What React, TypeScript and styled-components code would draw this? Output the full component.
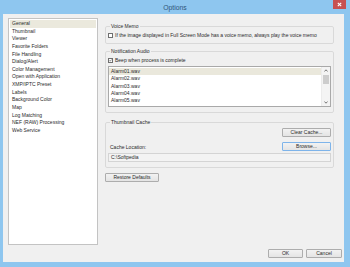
import React, { useState } from "react";
import styled, { createGlobalStyle } from "styled-components";

const GlobalStyle = createGlobalStyle`
  html, body {
    margin: 0;
    padding: 0;
    background: #8ec6ef;
  }
  body {
    font-family: "Liberation Sans", Arial, sans-serif;
  }
`;

const Window = styled.div`
  width: 350px;
  height: 267px;
  display: flex;
  flex-direction: column;
  background: #8ec6ef;
`;

const TitleBar = styled.div`
  position: relative;
  height: 14px;
  flex: none;
  display: flex;
  align-items: center;
  justify-content: center;
  font-size: 6.8px;
  color: #2f557a;
`;

const CloseButton = styled.div`
  position: absolute;
  top: 0;
  right: 4px;
  width: 13px;
  height: 9px;
  background: #c75050;
  display: flex;
  align-items: center;
  justify-content: center;
`;

const Client = styled.div`
  flex: 1;
  margin: 0 6px 5px 3px;
  background: #f0f0f0;
  display: flex;
  flex-direction: column;
  padding: 4px 2px 3px 5px;
  box-sizing: border-box;
  font-size: 5px;
  color: #2a2a2a;
`;

const Main = styled.div`
  height: 227px;
  display: flex;
  gap: 7px;
`;

const NavList = styled.div`
  width: 90px;
  box-sizing: border-box;
  border: 1px solid #c3c3c3;
  background: #fff;
  padding: 1px 1px;
`;

const NavItem = styled.div<{ $selected?: boolean }>`
  height: 7.64px;
  line-height: 7.64px;
  padding-left: 2px;
  white-space: nowrap;
  background: ${(p) => (p.$selected ? "#ebe9dd" : "transparent")};
`;

const Panel = styled.div`
  width: 229px;
  display: flex;
  flex-direction: column;
  padding-top: 5px;
`;

const Group = styled.fieldset<{ $gap?: number }>`
  margin: ${(p) => p.$gap ?? 0}px 0 0 0;
  padding: 0 2px 5px 2px;
  border: 1px solid #d9d9d9;
  border-radius: 2px;
  min-width: 0;
  display: flex;
  flex-direction: column;
`;

const Legend = styled.legend`
  padding: 0 1px;
  margin-left: 2px;
  height: 6px;
  line-height: 6px;
`;

const CheckRow = styled.label`
  display: flex;
  align-items: center;
  gap: 2px;
  height: 6px;
  margin-top: 3px;
  white-space: nowrap;
`;

const Box = styled.span`
  width: 5px;
  height: 5px;
  box-sizing: border-box;
  border: 1px solid #6f6f6f;
  background: #fff;
  display: flex;
  align-items: center;
  justify-content: center;
  flex: none;
`;

const SoundList = styled.div`
  margin-top: 3px;
  height: 41px;
  box-sizing: border-box;
  border: 1px solid #a9a9a9;
  background: #fff;
  display: flex;
`;

const SoundItems = styled.div`
  flex: 1;
  padding-top: 1px;
`;

const SoundItem = styled.div<{ $selected?: boolean }>`
  height: 7.25px;
  line-height: 7.25px;
  padding-left: 2px;
  background: ${(p) => (p.$selected ? "#eae8dc" : "transparent")};
`;

const ScrollBar = styled.div`
  width: 8px;
  display: flex;
  flex-direction: column;
  align-items: center;
  background: #f4f4f4;
  border-left: 1px solid #ececec;
`;

const Arrow = styled.div`
  height: 7px;
  width: 100%;
  display: flex;
  align-items: center;
  justify-content: center;
`;

const Thumb = styled.div`
  width: 6px;
  height: 9px;
  margin-top: 1px;
  background: #cdcdcd;
`;

const Track = styled.div`
  flex: 1;
`;

const Button = styled.button<{ $w: number; $focus?: boolean }>`
  width: ${(p) => p.$w}px;
  height: 9px;
  padding: 0;
  font: inherit;
  font-size: 5px;
  color: #2a2a2a;
  border: 1px solid ${(p) => (p.$focus ? "#7eb4ea" : "#adadad")};
  border-radius: 1px;
  background: linear-gradient(#f2f2f2, #e4e4e4);
  box-sizing: border-box;
  line-height: 7px;
  flex: none;
`;

const ButtonRow = styled.div<{ $gap: number; $inset?: number }>`
  display: flex;
  justify-content: space-between;
  align-items: center;
  margin-top: ${(p) => p.$gap}px;
  padding-left: ${(p) => p.$inset ?? 0}px;
`;

const TextBox = styled.div`
  margin-top: 2px;
  height: 9px;
  box-sizing: border-box;
  border: 1px solid #d4d4d4;
  background: #f3f3f3;
  line-height: 7px;
  padding-left: 2px;
`;

const Footer = styled.div`
  margin-top: 4px;
  display: flex;
  justify-content: flex-end;
  gap: 3px;
`;

const navItems = [
  "General",
  "Thumbnail",
  "Viewer",
  "Favorite Folders",
  "File Handling",
  "Dialog/Alert",
  "Color Management",
  "Open with Application",
  "XMP/IPTC Preset",
  "Labels",
  "Background Color",
  "Map",
  "Log Matching",
  "NEF (RAW) Processing",
  "Web Service",
];

const sounds = ["Alarm01.wav", "Alarm02.wav", "Alarm03.wav", "Alarm04.wav", "Alarm05.wav"];

const Check = () => (
  <svg width="5" height="5" viewBox="0 0 5 5">
    <path d="M0.6 2.4 L1.9 3.7 L4.3 0.9" fill="none" stroke="#222" strokeWidth="0.9" />
  </svg>
);

const Chevron = ({ up }: { up?: boolean }) => (
  <svg width="4" height="3" viewBox="0 0 4 3">
    <path
      d={up ? "M0.4 2.5 L2 0.8 L3.6 2.5" : "M0.4 0.5 L2 2.2 L3.6 0.5"}
      fill="none"
      stroke="#555"
      strokeWidth="0.8"
    />
  </svg>
);

export default function App() {
  const [section, setSection] = useState("General");
  const [beep, setBeep] = useState(true);

  return (
    <Window>
      <GlobalStyle />
      <TitleBar>
        Options
        <CloseButton>
          <svg width="5" height="5" viewBox="0 0 5 5">
            <path d="M0.8 0.8 L4.2 4.2 M4.2 0.8 L0.8 4.2" stroke="#fff" strokeWidth="1.1" />
          </svg>
        </CloseButton>
      </TitleBar>
      <Client>
        <Main>
          <NavList>
            {navItems.map((n) => (
              <NavItem key={n} $selected={n === section} onClick={() => setSection(n)}>
                {n}
              </NavItem>
            ))}
          </NavList>
          <Panel>
            <Group>
              <Legend>Voice Memo</Legend>
              <CheckRow>
                <Box />
                If the image displayed in Full Screen Mode has a voice memo, always play the voice memo
              </CheckRow>
            </Group>
            <Group $gap={4}>
              <Legend>Notification Audio</Legend>
              <CheckRow onClick={() => setBeep(!beep)}>
                <Box>{beep && <Check />}</Box>
                Beep when process is complete
              </CheckRow>
              <SoundList>
                <SoundItems>
                  {sounds.map((s, i) => (
                    <SoundItem key={s} $selected={i === 0}>
                      {s}
                    </SoundItem>
                  ))}
                </SoundItems>
                <ScrollBar>
                  <Arrow>
                    <Chevron up />
                  </Arrow>
                  <Thumb />
                  <Track />
                  <Arrow>
                    <Chevron />
                  </Arrow>
                </ScrollBar>
              </SoundList>
            </Group>
            <Group $gap={6}>
              <Legend>Thumbnail Cache</Legend>
              <ButtonRow $gap={3} $inset={2}>
                <span />
                <Button $w={49}>Clear Cache...</Button>
              </ButtonRow>
              <ButtonRow $gap={5} $inset={2}>
                <span>Cache Location:</span>
                <Button $w={49} $focus>
                  Browse...
                </Button>
              </ButtonRow>
              <TextBox>C:\Softpedia</TextBox>
            </Group>
            <ButtonRow $gap={5}>
              <Button $w={54}>Restore Defaults</Button>
            </ButtonRow>
          </Panel>
        </Main>
        <Footer>
          <Button $w={35}>OK</Button>
          <Button $w={36}>Cancel</Button>
        </Footer>
      </Client>
    </Window>
  );
}
